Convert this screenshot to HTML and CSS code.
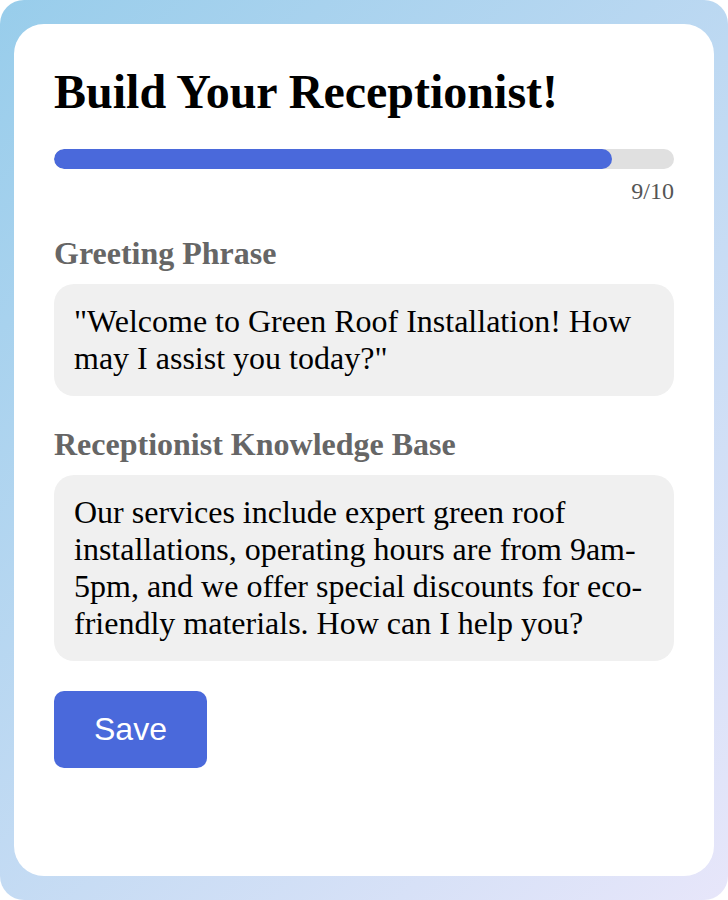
FILE: index.html
```html
<!DOCTYPE html>
<html>
<head>
  <meta charset="UTF-8">
  <title>Build Your Receptionist</title>
  <meta name="viewport" content="width=device-width, initial-scale=1.0">
  <link rel="stylesheet" href="styles.css">
</head>
<body>

  <div class="page">
    <div class="card">
      <h1>Build Your Receptionist!</h1>

      <div class="progress">
        <div class="progress-fill" style="width: 90%"></div>
      </div>
      <div class="step">9/10</div>

      <div class="field">
        <label>Greeting Phrase</label>
        <div class="field-box">"Welcome to Green Roof Installation! How may I assist you today?"</div>
      </div>

      <div class="field">
        <label>Receptionist Knowledge Base</label>
        <div class="field-box">Our services include expert green roof installations, operating hours are from 9am-5pm, and we offer special discounts for eco-friendly materials. How can I help you?</div>
      </div>

      <button type="button">Save</button>
    </div>
  </div>

</body>
</html>
```

FILE: styles.css
```css
body {
  margin: 0;
  padding: 0;
  background: #fff;
  font-family: "Liberation Serif", "Times New Roman", serif;
}
.page {
  height: 900px;
  box-sizing: border-box;
  padding: 24px 14px;
  border-radius: 24px;
  background: linear-gradient(135deg, #98cdeb 0%, #e7e6fa 100%);
  display: flex;
  flex-direction: column;
}
.card {
  flex: 1;
  background: #fff;
  border-radius: 30px;
  padding: 40px;
  display: flex;
  flex-direction: column;
  align-items: flex-start;
}
h1 {
  margin: 0 0 30px 0;
  font-size: 48px;
  font-weight: bold;
  color: #000;
}
.progress {
  width: 100%;
  height: 20px;
  background: #e0e0e0;
  border-radius: 10px;
  overflow: hidden;
}
.progress-fill {
  height: 100%;
  background: #4a69db;
  border-radius: 10px;
}
.step {
  width: 100%;
  margin-top: 9px;
  text-align: right;
  font-size: 24px;
  color: #555;
}
.field {
  width: 100%;
  margin-top: 30px;
}
.field label {
  display: block;
  margin-bottom: 12px;
  font-size: 32px;
  font-weight: bold;
  color: #666;
}
.field-box {
  padding: 19px 20px;
  background: #f0f0f0;
  border-radius: 20px;
  font-size: 32px;
  color: #000;
}
button {
  margin-top: 30px;
  padding: 20px 40px;
  border: none;
  border-radius: 10px;
  background: #4a69db;
  color: #fff;
  font-family: "Liberation Sans", Arial, sans-serif;
  font-size: 32px;
  cursor: pointer;
}
button:hover {
  background: #3d5cc9;
}
```
